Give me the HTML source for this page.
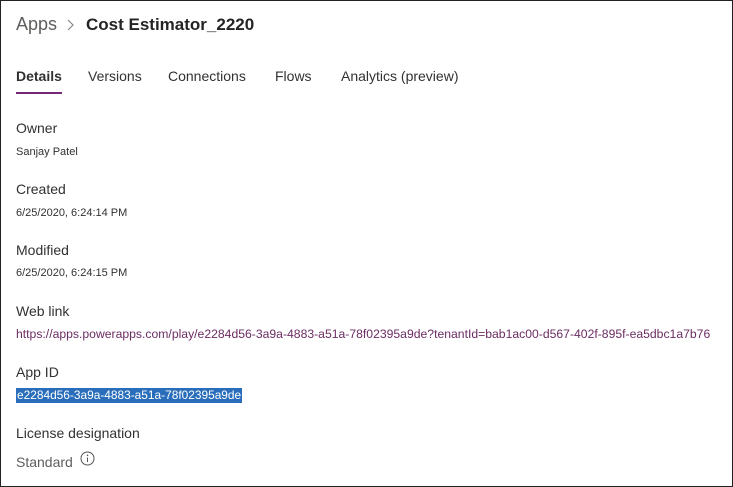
<!DOCTYPE html>
<html><head><style>
body{margin:0;width:733px;height:487px;overflow:hidden;background:#fff;font-family:"Liberation Sans",sans-serif;color:#323130}
.frame{position:absolute;left:0;top:0;width:731px;height:485px;border:1px solid #222}
.t{position:absolute;white-space:nowrap}
.lab{font-size:14px;color:#323130}
.val{font-size:11px;color:#323130}
</style></head><body>
<div class="frame"></div>
<div class="t" style="left:16px;top:14px;font-size:18px;color:#605e5c">Apps</div>
<svg style="position:absolute;left:66px;top:18px" width="10" height="14"><path d="M2 2 L7 7 L2 12" fill="none" stroke="#8a8886" stroke-width="1.2"/></svg>
<div class="t" style="left:86px;top:15px;font-size:17px;font-weight:bold;color:#252423">Cost Estimator_2220</div>
<div class="t" style="left:16px;top:68px;font-size:14px;font-weight:bold;color:#323130">Details</div>
<div style="position:absolute;left:16px;top:92px;width:46px;height:2px;background:#742774"></div>
<div class="t" style="left:88px;top:68px;font-size:14px">Versions</div>
<div class="t" style="left:168px;top:68px;font-size:14px">Connections</div>
<div class="t" style="left:275px;top:68px;font-size:14px">Flows</div>
<div class="t" style="left:341px;top:68px;font-size:14px">Analytics (preview)</div>
<div class="t lab" style="left:16px;top:120px">Owner</div>
<div class="t val" style="left:16px;top:146px">Sanjay Patel</div>
<div class="t lab" style="left:16px;top:181px">Created</div>
<div class="t val" style="left:16px;top:207px">6/25/2020, 6:24:14 PM</div>
<div class="t lab" style="left:16px;top:242px">Modified</div>
<div class="t val" style="left:16px;top:267px">6/25/2020, 6:24:15 PM</div>
<div class="t lab" style="left:16px;top:303px">Web link</div>
<div class="t" style="left:16px;top:327px;font-size:12.2px;color:#6b2c63">https://apps.powerapps.com/play/e2284d56-3a9a-4883-a51a-78f02395a9de?tenantId=bab1ac00-d567-402f-895f-ea5dbc1a7b76</div>
<div class="t lab" style="left:16px;top:364px">App ID</div>
<div class="t" style="left:16px;top:388px;font-size:11.9px;background:#2a6ebb;color:#fff;padding:0 1px;line-height:15px">e2284d56-3a9a-4883-a51a-78f02395a9de</div>
<div class="t lab" style="left:16px;top:425px">License designation</div>
<div class="t" style="left:16px;top:454px;font-size:14px;color:#605e5c">Standard</div>
<svg style="position:absolute;left:80px;top:451px" width="15" height="15"><circle cx="7.5" cy="7.5" r="6.5" fill="none" stroke="#555" stroke-width="1"/><line x1="7.5" y1="6.5" x2="7.5" y2="11" stroke="#555"/><circle cx="7.5" cy="4.3" r=".8" fill="#555"/></svg>
</body></html>
